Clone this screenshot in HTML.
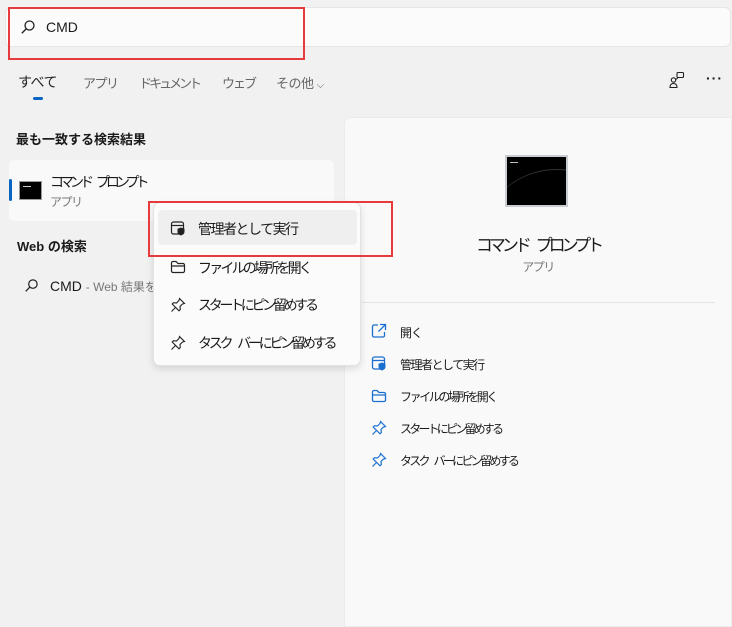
<!DOCTYPE html>
<html><head><meta charset="utf-8"><style>
*{margin:0;padding:0;box-sizing:border-box}
body{width:732px;height:626px;overflow:hidden;background:#f1f1f1;font-family:"Liberation Sans","Noto Sans CJK JP",sans-serif;color:#1a1a1a;position:relative;font-size:13px}
.abs{position:absolute}
.t{white-space:nowrap}
</style></head><body>
<div class="abs" style="left:5px;top:7px;width:726px;height:40px;background:#fbfbfb;border:1px solid #e6e6e6;border-radius:6px"></div>
<svg class="abs" style="left:20px;top:19px" width="16" height="16" viewBox="0 0 16 16"><circle cx="9.5" cy="6.5" r="4.5" fill="none" stroke="#222" stroke-width="1.3"/><path d="M6.3 9.7L1.8 14.2" stroke="#222" stroke-width="1.4"/></svg>
<div class="abs t" style="left:46px;top:19px;font-size:14px">CMD</div>
<div class="abs" style="left:8px;top:7px;width:297px;height:53px;border:2px solid #e83a3a"></div>

<div class="abs t" style="left:18px;top:72px;font-size:14px;color:#222;letter-spacing:-0.5px">すべて</div>
<div class="abs" style="left:33px;top:97px;width:10px;height:3px;background:#0a64c2;border-radius:2px"></div>
<div class="abs t" style="left:83px;top:73px;font-size:13px;color:#666;letter-spacing:-1.5px">アプリ</div>
<div class="abs t" style="left:139px;top:73px;font-size:13px;color:#666;letter-spacing:-3px">ドキュメント</div>
<div class="abs t" style="left:222px;top:73px;font-size:13px;color:#666;letter-spacing:-2px">ウェブ</div>
<div class="abs t" style="left:276px;top:73px;font-size:13px;color:#666;letter-spacing:-0.5px">その他 <span style="font-size:10px">⌵</span></div>
<svg class="abs" style="left:668px;top:71px" width="18" height="18" viewBox="0 0 18 18" fill="none" stroke="#222" stroke-width="1.1"><rect x="9" y="1.5" width="6.5" height="5" rx="1"/><path d="M10 6.5l-2 2"/><circle cx="5.5" cy="9" r="2.2"/><path d="M2 16.5c0-3 1.5-4 3.5-4s3.5 1 3.5 4z"/></svg>
<div class="abs t" style="left:706px;top:70px;font-size:14px;font-weight:bold;letter-spacing:1px">···</div>

<div class="abs t" style="left:16px;top:129px;font-size:13px;font-weight:bold">最も一致する検索結果</div>
<div class="abs" style="left:9px;top:160px;width:325px;height:61px;background:#f9f9f9;border-radius:5px"></div>
<div class="abs" style="left:9px;top:179px;width:3px;height:22px;background:#0a64c2;border-radius:2px"></div>
<div class="abs" style="left:19px;top:181px;width:23px;height:19px;background:#000;border:1px solid #999"><div style="width:8px;height:1px;background:#ccc;margin:4px 0 0 3px"></div></div>
<div class="abs t" style="left:50px;top:172px;font-size:14px;letter-spacing:-4px;word-spacing:6px">コマンド プロンプト</div>
<div class="abs t" style="left:50px;top:193px;font-size:12px;color:#777;letter-spacing:-1.5px">アプリ</div>

<div class="abs t" style="left:17px;top:236px;font-size:13px;font-weight:bold">Web の検索</div>
<svg class="abs" style="left:24px;top:278px" width="15" height="15" viewBox="0 0 16 16"><circle cx="9.5" cy="6.5" r="4.5" fill="none" stroke="#222" stroke-width="1.3"/><path d="M6.3 9.7L1.8 14.2" stroke="#222" stroke-width="1.4"/></svg>
<div class="abs t" style="left:50px;top:278px;font-size:14px">CMD <span style="font-size:12px;color:#777">- Web 結果を</span></div>

<div class="abs" style="left:344px;top:117px;width:388px;height:510px;background:#f9f9f9;border-radius:7px 0 0 0;border:1px solid #ececec"></div>
<div class="abs" style="left:505px;top:155px;width:63px;height:52px;background:#000;border:2px solid #c9cdd2;overflow:hidden"><div style="position:absolute;left:-20px;top:12px;width:140px;height:120px;border-radius:50%;border-top:1px solid #333"></div><div style="width:8px;height:1px;background:#bbb;margin:5px 0 0 3px"></div></div>
<div class="abs t" style="left:344px;width:388px;text-align:center;top:231px;font-size:17px;letter-spacing:-4px;word-spacing:7px">コマンド プロンプト</div>
<div class="abs t" style="left:344px;width:388px;text-align:center;top:258px;font-size:12px;color:#777;letter-spacing:-1.5px">アプリ</div>
<div class="abs" style="left:362px;top:302px;width:353px;height:1px;background:#e4e4e4"></div>

<svg class="abs" style="left:371px;top:323px" width="16" height="16" viewBox="0 0 16 16" fill="none" stroke="#1a6fd0" stroke-width="1.3"><path d="M7 2H3a1.5 1.5 0 0 0-1.5 1.5v9A1.5 1.5 0 0 0 3 14h9a1.5 1.5 0 0 0 1.5-1.5V9"/><path d="M9 1.5h5.5V7M14.5 1.5L7.5 8.5"/></svg>
<div class="abs t" style="left:400px;top:324px;font-size:12px;letter-spacing:-1px">開く</div>
<svg class="abs" style="left:371px;top:355px" width="16" height="16" viewBox="0 0 16 16"><rect x="1.5" y="2" width="12" height="12" rx="2" fill="none" stroke="#1a6fd0" stroke-width="1.3"/><path d="M1.5 5.5h12" stroke="#1a6fd0" stroke-width="1.3"/><path d="M11 7.5l3.5 1.2v3c0 2-1.6 3-3.5 3.8-1.9-.8-3.5-1.8-3.5-3.8v-3z" fill="#1a6fd0"/></svg>
<div class="abs t" style="left:400px;top:356px;font-size:12px;letter-spacing:-1.5px">管理者として実行</div>
<svg class="abs" style="left:371px;top:388px" width="16" height="16" viewBox="0 0 16 16" fill="none" stroke="#1a6fd0" stroke-width="1.3"><path d="M1.5 4a1.5 1.5 0 0 1 1.5-1.5h3l2 2h5a1.5 1.5 0 0 1 1.5 1.5v6a1.5 1.5 0 0 1-1.5 1.5H3A1.5 1.5 0 0 1 1.5 12z M1.5 7h13"/></svg>
<div class="abs t" style="left:400px;top:388px;font-size:12px;letter-spacing:-2.4px">ファイルの場所を開く</div>
<svg class="abs" style="left:371px;top:420px" width="16" height="16" viewBox="0 0 16 16" fill="none" stroke="#1a6fd0" stroke-width="1.2"><path d="M9.5 1.5l5 5-2 .5-2.5 2.5.3 3L9 13.8 2.2 7l1.3-1.3 3 .3L9 3.5z M5.5 10.5L1.5 14.5"/></svg>
<div class="abs t" style="left:400px;top:420px;font-size:12px;letter-spacing:-2.8px">スタートにピン留めする</div>
<svg class="abs" style="left:371px;top:452px" width="16" height="16" viewBox="0 0 16 16" fill="none" stroke="#1a6fd0" stroke-width="1.2"><path d="M9.5 1.5l5 5-2 .5-2.5 2.5.3 3L9 13.8 2.2 7l1.3-1.3 3 .3L9 3.5z M5.5 10.5L1.5 14.5"/></svg>
<div class="abs t" style="left:400px;top:452px;font-size:12px;letter-spacing:-2.7px;word-spacing:5px">タスク バーにピン留めする</div>

<div class="abs" style="left:153px;top:202px;width:208px;height:164px;background:#fbfbfb;border:1px solid #e2e2e2;border-radius:7px;box-shadow:0 3px 8px rgba(0,0,0,.12)"></div>
<div class="abs" style="left:158px;top:210px;width:199px;height:35px;background:#efefef;border-radius:4px"></div>
<svg class="abs" style="left:170px;top:220px" width="16" height="16" viewBox="0 0 16 16"><rect x="1.5" y="2" width="12" height="12" rx="2" fill="none" stroke="#222" stroke-width="1.2"/><path d="M1.5 5.5h12" stroke="#222" stroke-width="1.2"/><path d="M11 7.5l3.5 1.2v3c0 2-1.6 3-3.5 3.8-1.9-.8-3.5-1.8-3.5-3.8v-3z" fill="#222"/></svg>
<div class="abs t" style="left:198px;top:219px;font-size:14px;letter-spacing:-1.5px">管理者として実行</div>
<svg class="abs" style="left:170px;top:259px" width="16" height="16" viewBox="0 0 16 16" fill="none" stroke="#222" stroke-width="1.2"><path d="M1.5 4a1.5 1.5 0 0 1 1.5-1.5h3l2 2h5a1.5 1.5 0 0 1 1.5 1.5v6a1.5 1.5 0 0 1-1.5 1.5H3A1.5 1.5 0 0 1 1.5 12z M1.5 7h13"/></svg>
<div class="abs t" style="left:198px;top:258px;font-size:14px;letter-spacing:-2.8px">ファイルの場所を開く</div>
<svg class="abs" style="left:170px;top:297px" width="16" height="16" viewBox="0 0 16 16" fill="none" stroke="#222" stroke-width="1.1"><path d="M9.5 1.5l5 5-2 .5-2.5 2.5.3 3L9 13.8 2.2 7l1.3-1.3 3 .3L9 3.5z M5.5 10.5L1.5 14.5"/></svg>
<div class="abs t" style="left:198px;top:295px;font-size:14px;letter-spacing:-3.3px">スタートにピン留めする</div>
<svg class="abs" style="left:170px;top:335px" width="16" height="16" viewBox="0 0 16 16" fill="none" stroke="#222" stroke-width="1.1"><path d="M9.5 1.5l5 5-2 .5-2.5 2.5.3 3L9 13.8 2.2 7l1.3-1.3 3 .3L9 3.5z M5.5 10.5L1.5 14.5"/></svg>
<div class="abs t" style="left:198px;top:333px;font-size:14px;letter-spacing:-3.2px;word-spacing:6px">タスク バーにピン留めする</div>
<div class="abs" style="left:148px;top:201px;width:245px;height:56px;border:2px solid #e83a3a"></div>
</body></html>
